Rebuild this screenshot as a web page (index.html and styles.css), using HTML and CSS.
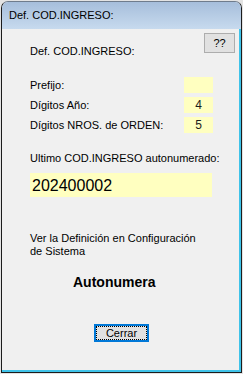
FILE: index.html
```html
<!DOCTYPE html>
<html lang="es">
  <head>
    <meta charset="utf-8" />
    <title>Def. COD.INGRESO</title>
    <link rel="stylesheet" href="styles.css">
  </head>
  <body>
    <div class="window">
      <div class="titlebar">Def. COD.INGRESO:</div>
      <div class="client">
        <div class="top-row">
          <span class="label head-label">Def. COD.INGRESO:</span>
          <button class="help-btn">??</button>
        </div>

        <div class="fields">
          <div class="field">
            <span class="label field-label">Prefijo:</span>
            <span class="box"></span>
          </div>
          <div class="field">
            <span class="label field-label">Dígitos Año:</span>
            <span class="box">4</span>
          </div>
          <div class="field">
            <span class="label field-label">Dígitos NROS. de ORDEN:</span>
            <span class="box">5</span>
          </div>
        </div>

        <div class="label last-label">Ultimo COD.INGRESO autonumerado:</div>
        <div class="big-box">202400002</div>

        <div class="label note">Ver la Definición en Configuración<br />de Sistema</div>

        <div class="mode">Autonumera</div>

        <button class="close-btn">Cerrar</button>
      </div>
    </div>
  </body>
</html>
```

FILE: styles.css
```css
body {
  margin: 0;
  background: #e3e3e3;
  font-family: "Liberation Sans", Arial, sans-serif;
  font-size: 11px;
  color: #000;
}
.window {
  box-sizing: border-box;
  margin: 1px 0 0 1px;
  width: 241px;
  height: 372px;
  border: 1px solid #1c1c1c;
  border-top-color: #6f7c8c;
  border-radius: 7px 7px 0 0;
  display: flex;
  flex-direction: column;
  overflow: hidden;
  background: #f0f0f0;
}
.titlebar {
  height: 27px;
  line-height: 26px;
  padding-left: 7px;
  font-size: 11px;
  color: #000;
  background: linear-gradient(#a6bedb, #c7daee);
  flex: none;
}
.client {
  flex: 1;
  padding: 4px 0 0 28px;
  border-right: 2px solid #3fc3e9;
  border-bottom: 2px solid #3fc3e9;
  border-left: 1px solid #f7f7f7;
  margin-left: -1px;
  background: #f0f0f0;
}
.label {
  line-height: 13px;
}
.top-row {
  display: flex;
  align-items: flex-start;
}
.head-label {
  margin-top: 12px;
}
.help-btn {
  margin: 0 4px 0 auto;
  width: 31px;
  height: 20px;
  padding: 0;
  background: #e1e1e1;
  border: 1px solid #adadad;
  font-family: "Liberation Sans", Arial, sans-serif;
  font-size: 11px;
  color: #000;
}
.fields {
  margin-top: 19px;
  display: flex;
  flex-direction: column;
  gap: 4px;
}
.field {
  display: flex;
  align-items: center;
  height: 16px;
}
.field-label {
  width: 154px;
}
.box {
  width: 29px;
  height: 16px;
  line-height: 16px;
  background: #ffffc0;
  text-align: center;
  font-size: 12px;
  color: #1c1c1c;
}
.last-label {
  margin-top: 19px;
}
.big-box {
  margin-top: 8px;
  width: 180px;
  height: 24px;
  line-height: 25px;
  padding-left: 2px;
  background: #ffffc0;
  font-size: 16px;
}
.note {
  margin-top: 35px;
}
.mode {
  margin: 16px 0 0 43px;
  line-height: 16px;
  font-size: 14px;
  font-weight: bold;
}
.close-btn {
  display: block;
  margin: 34px 0 0 64px;
  width: 55px;
  height: 18px;
  padding: 0;
  background: #e1e1e1;
  border: 2px solid #0078d7;
  outline: 1px dotted #000;
  outline-offset: -3px;
  font-family: "Liberation Sans", Arial, sans-serif;
  font-size: 11px;
  color: #000;
}
```
